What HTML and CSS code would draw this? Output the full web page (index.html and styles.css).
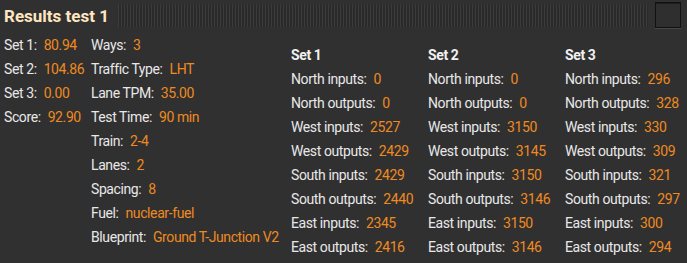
FILE: index.html
```html
<!DOCTYPE html>
<html>
<head>
<meta charset="utf-8">
<link rel="stylesheet" href="styles.css">
</head>
<body>
<div class="window">
  <div class="titlebar">
    <div class="title">Results test 1</div>
    <div class="handle"></div>
    <div class="close"></div>
  </div>
  <div class="content">
    <div class="summary">
      <div class="kv"><span class="k">Set 1:</span><span class="v">80.94</span></div>
      <div class="kv"><span class="k">Ways:</span><span class="v">3</span></div>
      <div class="kv"><span class="k">Set 2:</span><span class="v">104.86</span></div>
      <div class="kv"><span class="k">Traffic Type:</span><span class="v">LHT</span></div>
      <div class="kv"><span class="k">Set 3:</span><span class="v">0.00</span></div>
      <div class="kv"><span class="k">Lane TPM:</span><span class="v">35.00</span></div>
      <div class="kv"><span class="k">Score:</span><span class="v">92.90</span></div>
      <div class="kv"><span class="k">Test Time:</span><span class="v">90 min</span></div>
      <div class="kv"></div>
      <div class="kv"><span class="k">Train:</span><span class="v">2-4</span></div>
      <div class="kv"></div>
      <div class="kv"><span class="k">Lanes:</span><span class="v">2</span></div>
      <div class="kv"></div>
      <div class="kv"><span class="k">Spacing:</span><span class="v">8</span></div>
      <div class="kv"></div>
      <div class="kv"><span class="k">Fuel:</span><span class="v">nuclear-fuel</span></div>
      <div class="kv"></div>
      <div class="kv"><span class="k">Blueprint:</span><span class="v">Ground T-Junction V2</span></div>
    </div>
    <div class="set">
      <div class="set-head">Set 1</div>
      <div class="kv"><span class="k">North inputs:</span><span class="v">0</span></div>
      <div class="kv"><span class="k">North outputs:</span><span class="v">0</span></div>
      <div class="kv"><span class="k">West inputs:</span><span class="v">2527</span></div>
      <div class="kv"><span class="k">West outputs:</span><span class="v">2429</span></div>
      <div class="kv"><span class="k">South inputs:</span><span class="v">2429</span></div>
      <div class="kv"><span class="k">South outputs:</span><span class="v">2440</span></div>
      <div class="kv"><span class="k">East inputs:</span><span class="v">2345</span></div>
      <div class="kv"><span class="k">East outputs:</span><span class="v">2416</span></div>
    </div>
    <div class="set">
      <div class="set-head">Set 2</div>
      <div class="kv"><span class="k">North inputs:</span><span class="v">0</span></div>
      <div class="kv"><span class="k">North outputs:</span><span class="v">0</span></div>
      <div class="kv"><span class="k">West inputs:</span><span class="v">3150</span></div>
      <div class="kv"><span class="k">West outputs:</span><span class="v">3145</span></div>
      <div class="kv"><span class="k">South inputs:</span><span class="v">3150</span></div>
      <div class="kv"><span class="k">South outputs:</span><span class="v">3146</span></div>
      <div class="kv"><span class="k">East inputs:</span><span class="v">3150</span></div>
      <div class="kv"><span class="k">East outputs:</span><span class="v">3146</span></div>
    </div>
    <div class="set">
      <div class="set-head">Set 3</div>
      <div class="kv"><span class="k">North inputs:</span><span class="v">296</span></div>
      <div class="kv"><span class="k">North outputs:</span><span class="v">328</span></div>
      <div class="kv"><span class="k">West inputs:</span><span class="v">330</span></div>
      <div class="kv"><span class="k">West outputs:</span><span class="v">309</span></div>
      <div class="kv"><span class="k">South inputs:</span><span class="v">321</span></div>
      <div class="kv"><span class="k">South outputs:</span><span class="v">297</span></div>
      <div class="kv"><span class="k">East inputs:</span><span class="v">300</span></div>
      <div class="kv"><span class="k">East outputs:</span><span class="v">294</span></div>
    </div>
  </div>
</div>
</body>
</html>
```
FILE: styles.css
```css
html, body {
  margin: 0;
  padding: 0;
  background: #313031;
}
body {
  font-family: Roboto, "Liberation Sans", sans-serif;
  font-size: 14px;
  letter-spacing: -0.4px;
  color: #e8e8e8;
}
.window {
  width: 687px;
  height: 263px;
  padding: 0 6px 0 4px;
  box-sizing: border-box;
  overflow: hidden;
}
.titlebar {
  display: flex;
  align-items: center;
  height: 30px;
}
.title {
  font-weight: bold;
  font-size: 17px;
  letter-spacing: 0;
  color: #ffe6c0;
  margin-right: 9px;
  padding-top: 2px;
}
.handle {
  flex: 1;
  height: 23px;
  background: repeating-linear-gradient(90deg, #3d3c3d 0 1px, #2b2a2b 1px 3px);
}
.close {
  width: 24px;
  height: 24px;
  margin-left: 7px;
  background: #302f30;
  border: 1px solid #121112;
  box-shadow: 0 1px 0 #4a494a, inset 0 1px 0 #1f1e1f;
}
.content {
  display: grid;
  grid-template-columns: 287px 137px 137px auto;
  margin-top: 3px;
}
.summary {
  display: grid;
  grid-template-columns: 87px auto;
  align-content: start;
}
.kv {
  display: flex;
  gap: 7px;
  height: 24px;
  line-height: 24px;
  white-space: nowrap;
}
.v {
  color: #ee8a20;
}
.set {
  padding-top: 10px;
}
.set-head {
  font-weight: bold;
  height: 24px;
  line-height: 24px;
  color: #f0f0f0;
}
```
